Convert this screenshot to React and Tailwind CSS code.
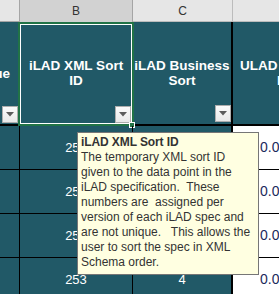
const font = { fontFamily: '"Liberation Sans", Arial, sans-serif' };

function FilterButton({ className }) {
  return (
    <div
      className={
        "absolute w-[16px] h-[17px] flex items-center justify-center bg-gradient-to-b from-[#fbfbfb] to-[#e9e9e9] border border-[#adadad] " +
        className
      }
    >
      <svg width="8" height="5" viewBox="0 0 8 5">
        <path d="M0 0 L8 0 L4 4.5 Z" fill="#5c5c5c" />
      </svg>
    </div>
  );
}

const rows = [
  { b: "250", c: "1" },
  { b: "251", c: "2" },
  { b: "252", c: "3" },
  { b: "253", c: "4" },
];

export default function App() {
  return (
    <div
      className="relative w-[279px] h-[294px] overflow-hidden bg-white"
      style={font}
    >
      {/* column letters */}
      <div className="flex h-[22px] text-[12px] text-[#333]">
        <div className="w-[20px] shrink-0 bg-[#e6e6e6] border-r border-b border-[#a5a5a5]" />
        <div className="w-[113px] shrink-0 bg-[#d2d2d2] border-r border-[#a5a5a5] flex items-center justify-center">
          B
        </div>
        <div className="w-[100px] shrink-0 bg-[#e6e6e6] border-r border-b border-[#bcbcbc] flex items-center justify-center">
          C
        </div>
        <div className="w-[100px] shrink-0 bg-[#e6e6e6] border-b border-[#bcbcbc] flex items-center justify-center">
          D
        </div>
      </div>

      {/* header row */}
      <div className="flex h-[104px] text-white font-bold text-[13.5px] leading-[15px]">
        <div className="relative w-[20px] shrink-0 bg-[#215967] border-r border-b-2 border-black overflow-hidden flex items-center justify-end pr-[9px] whitespace-nowrap">
          <span>Value</span>
          <FilterButton className="right-[1px] bottom-[1px]" />
        </div>
        <div className="relative w-[113px] shrink-0 bg-[#215967] border-r border-b-2 border-black flex items-center justify-center text-center">
          <span>
            iLAD XML Sort
            <br />
            ID
          </span>
          <FilterButton className="right-[1px] bottom-[1px]" />
        </div>
        <div className="relative w-[100px] shrink-0 bg-[#215967] border-r-2 border-b-2 border-black flex items-center justify-center text-center">
          <span>
            iLAD Business
            <br />
            Sort
          </span>
          <FilterButton className="right-0 bottom-[2px]" />
        </div>
        <div className="w-[100px] shrink-0 bg-[#215967] border-b-2 border-black flex flex-col justify-center whitespace-nowrap overflow-hidden">
          <span className="pl-[7px]">ULAD Data Point</span>
          <span className="pl-[44px]">ID</span>
        </div>
      </div>

      {/* data rows */}
      {rows.map((r) => (
        <div key={r.b} className="flex h-[44px] text-[13px]">
          <div className="w-[20px] shrink-0 bg-[#215967] border-r border-b border-black" />
          <div className="w-[113px] shrink-0 bg-[#215967] border-r border-b border-black flex items-center justify-center text-white">
            {r.b}
          </div>
          <div className="w-[100px] shrink-0 bg-[#215967] border-r-2 border-b border-black flex items-center justify-center text-white">
            {r.c}
          </div>
          <div className="w-[100px] shrink-0 bg-white border-b border-black flex items-center pl-[27px] text-[14px] text-[#1b2a5c] whitespace-nowrap">
            0.0000
          </div>
        </div>
      ))}

      {/* selected cell */}
      <div className="absolute left-[18px] top-[22px] w-[116px] h-[104px] border-2 border-[#217346]">
        <div className="absolute inset-0 border border-white" />
      </div>
      <div className="absolute left-[129px] top-[122px] w-[6px] h-[6px] bg-[#217346] border border-white" />

      {/* comment connector */}
      <div className="absolute left-[132px] top-[126px] w-px h-[7px] bg-black" />

      {/* comment */}
      <div className="absolute left-[77px] top-[132px] w-[182px] h-[143px] bg-[#ffffe1] border border-[#767676] pl-[3px] pt-[2px] text-[12px] leading-[15px] text-[#333] whitespace-pre">
        <div className="font-bold tracking-[-0.1px]">iLAD XML Sort ID</div>
        <div>The temporary XML sort ID</div>
        <div>given to the data point in the</div>
        <div>iLAD specification.  These</div>
        <div>numbers are  assigned per</div>
        <div>version of each iLAD spec and</div>
        <div>are not unique.   This allows the</div>
        <div>user to sort the spec in XML</div>
        <div>Schema order.</div>
      </div>
    </div>
  );
}
